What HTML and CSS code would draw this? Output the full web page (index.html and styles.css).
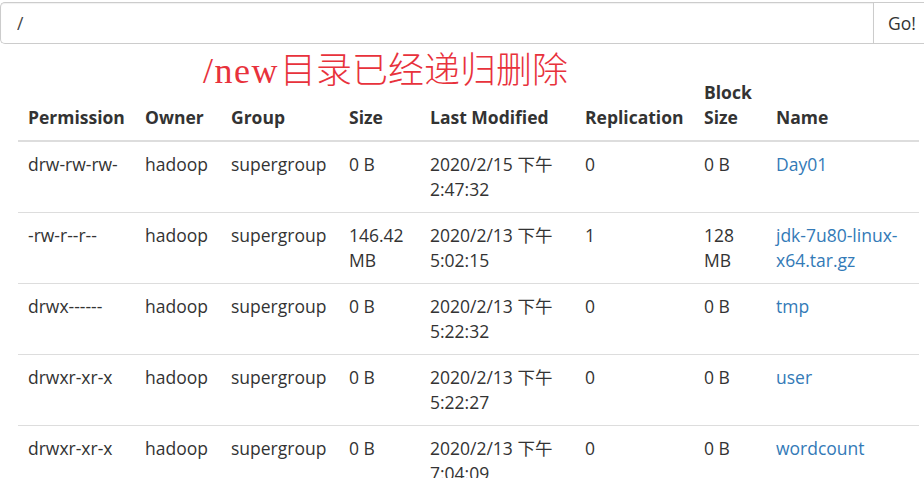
FILE: index.html
```html
<!DOCTYPE html>
<html lang="zh-CN">
<head>
<meta charset="utf-8">
<title>Browse Directory</title>
<link rel="stylesheet" href="styles.css">
</head>
<body>
<div class="page">
  <div class="input-group">
    <input class="path-input" type="text" value="/">
    <button class="go-btn" type="button">Go!</button>
  </div>
  <div class="note"><span class="note-latin">/new</span>目录已经递归删除</div>
  <div class="table-wrap">
    <table class="listing">
      <colgroup>
        <col class="c-perm"><col class="c-owner"><col class="c-group"><col class="c-size">
        <col class="c-mod"><col class="c-rep"><col class="c-block"><col class="c-name">
      </colgroup>
      <thead>
        <tr>
          <th>Permission</th><th>Owner</th><th>Group</th><th>Size</th>
          <th>Last Modified</th><th>Replication</th><th>Block Size</th><th>Name</th>
        </tr>
      </thead>
      <tbody>
        <tr>
          <td>drw-rw-rw-</td><td>hadoop</td><td>supergroup</td><td>0 B</td>
          <td>2020/2/15 下午 2:47:32</td><td>0</td><td>0 B</td><td><a href="#">Day01</a></td>
        </tr>
        <tr>
          <td>-rw-r--r--</td><td>hadoop</td><td>supergroup</td><td>146.42 MB</td>
          <td>2020/2/13 下午 5:02:15</td><td>1</td><td>128 MB</td><td><a href="#">jdk-7u80-linux-x64.tar.gz</a></td>
        </tr>
        <tr>
          <td>drwx------</td><td>hadoop</td><td>supergroup</td><td>0 B</td>
          <td>2020/2/13 下午 5:22:32</td><td>0</td><td>0 B</td><td><a href="#">tmp</a></td>
        </tr>
        <tr>
          <td>drwxr-xr-x</td><td>hadoop</td><td>supergroup</td><td>0 B</td>
          <td>2020/2/13 下午 5:22:27</td><td>0</td><td>0 B</td><td><a href="#">user</a></td>
        </tr>
        <tr>
          <td>drwxr-xr-x</td><td>hadoop</td><td>supergroup</td><td>0 B</td>
          <td>2020/2/13 下午 7:04:09</td><td>0</td><td>0 B</td><td><a href="#">wordcount</a></td>
        </tr>
      </tbody>
    </table>
  </div>
</div>
</body>
</html>
```
FILE: styles.css
```css
html, body {
  margin: 0;
  padding: 0;
  background: #fff;
  overflow: hidden;
}
body {
  font-family: "Open Sans", "Noto Sans CJK SC", sans-serif;
  font-size: 17.5px;
  line-height: 25px;
  color: #333;
}
.page {
  position: relative;
  width: 924px;
}
.input-group {
  display: flex;
  margin-top: 2px;
  width: 930px;
  height: 42px;
}
.path-input {
  flex: 1;
  box-sizing: border-box;
  height: 42px;
  margin: 0;
  padding: 0 16px;
  border: 1px solid #ccc;
  border-right: 0;
  border-radius: 5px 0 0 5px;
  font-family: inherit;
  font-size: 17.5px;
  color: #444;
  outline: none;
  box-shadow: inset 0 1px 1px rgba(0,0,0,0.06);
}
.go-btn {
  width: 57px;
  box-sizing: border-box;
  height: 42px;
  margin: 0;
  padding: 0 0 0 14px;
  text-align: left;
  border: 1px solid #ccc;
  background: #fff;
  font-family: inherit;
  font-size: 17.5px;
  color: #333;
}
.note {
  position: absolute;
  left: 203px;
  top: 45px;
  font-family: "Noto Sans CJK SC", sans-serif;
  font-weight: 300;
  font-size: 36px;
  line-height: 40px;
  color: #e8323c;
  white-space: nowrap;
}
.note-latin {
  font-family: "Liberation Serif", serif;
  font-weight: 400;
  letter-spacing: 1.5px;
  margin-right: 1px;
}
.table-wrap {
  padding: 26px 5px 0 18px;
}
.listing {
  width: 901px;
  table-layout: fixed;
  border-collapse: collapse;
  border-spacing: 0;
}
.c-perm { width: 117px; }
.c-owner { width: 86px; }
.c-group { width: 118px; }
.c-size { width: 81px; }
.c-mod { width: 155px; }
.c-rep { width: 119px; }
.c-block { width: 72px; }
.c-name { width: 153px; }
.listing th {
  text-align: left;
  font-weight: 700;
  vertical-align: bottom;
  padding: 10px;
  border-bottom: 2px solid #ddd;
}
.listing td {
  vertical-align: top;
  padding: 10px;
  border-top: 1px solid #ddd;
  word-wrap: break-word;
}
.listing a {
  color: #337ab7;
  text-decoration: none;
}
```
